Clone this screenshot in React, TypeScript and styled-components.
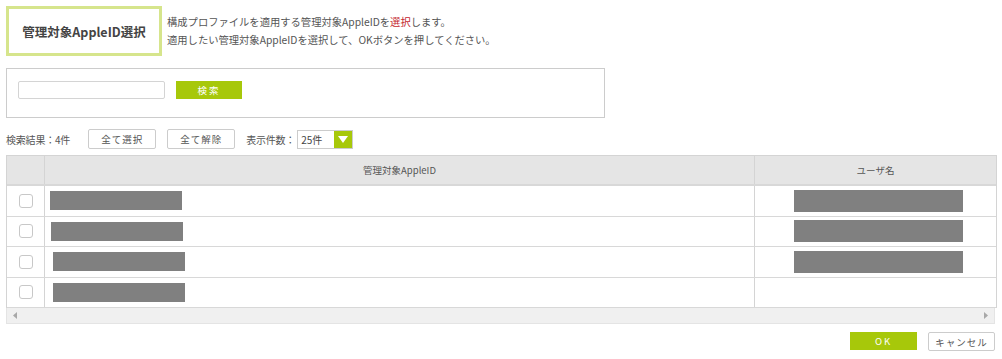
import React from "react";
import styled, { createGlobalStyle } from "styled-components";

const GlobalStyle = createGlobalStyle`
  body {
    margin: 0;
    background: #fff;
    font-family: "Noto Sans CJK JP", "Noto Sans", sans-serif;
    color: #555;
  }
`;

const Page = styled.div`
  width: 1002px;
  height: 359px;
  padding: 6px 7px 0 6px;
  box-sizing: border-box;
  overflow: hidden;
`;

const Header = styled.div`
  display: flex;
  align-items: flex-start;
  gap: 5px;
`;

const TitleBox = styled.div`
  width: 156px;
  height: 50px;
  box-sizing: border-box;
  border: 3px solid #d6e58c;
  display: flex;
  align-items: center;
  justify-content: center;
  font-size: 12.5px;
  font-weight: bold;
  color: #444;
`;

const Description = styled.div`
  padding-top: 7px;
  font-size: 10.3px;
  line-height: 18px;
  color: #555;
`;

const Red = styled.span`
  color: #c4262e;
`;

const SearchPanel = styled.div`
  margin-top: 12px;
  width: 599px;
  height: 50px;
  box-sizing: border-box;
  border: 1px solid #ccc;
  padding: 12px 11px;
  display: flex;
  align-items: flex-start;
  gap: 11px;
`;

const SearchInput = styled.input`
  width: 147px;
  height: 18px;
  box-sizing: border-box;
  border: 1px solid #d4d4d4;
  border-radius: 2px;
  margin: 0;
  padding: 0 4px;
`;

const GreenButton = styled.button<{ w: number }>`
  width: ${(p) => p.w}px;
  height: 18px;
  border: none;
  background: #a7c80a;
  color: #fff;
  font-family: inherit;
  font-size: 9.5px;
  letter-spacing: 2px;
  padding: 0;
  cursor: pointer;
`;

const Toolbar = styled.div`
  margin-top: 11px;
  height: 20px;
  display: flex;
  align-items: center;
  font-size: 10px;
  color: #555;
`;

const Label = styled.span<{ gap?: number }>`
  margin-right: ${(p) => p.gap ?? 0}px;
  letter-spacing: -0.2px;
`;

const WhiteButton = styled.button`
  width: 68px;
  height: 20px;
  box-sizing: border-box;
  border: 1px solid #ccc;
  border-radius: 2px;
  background: #fff;
  color: #555;
  font-family: inherit;
  font-size: 9.5px;
  letter-spacing: 1px;
  padding: 0;
  margin-right: 11px;
`;

const Select = styled.div`
  width: 56px;
  height: 19px;
  box-sizing: border-box;
  border: 1px solid #ccc;
  display: flex;
  align-items: stretch;
`;

const SelectValue = styled.span`
  flex: 1;
  padding-left: 3px;
  font-size: 10px;
  line-height: 17px;
  color: #444;
`;

const SelectArrow = styled.span`
  width: 18px;
  background: #a7c80a;
  display: flex;
  align-items: center;
  justify-content: center;
`;

const Table = styled.div`
  margin-top: 6px;
  width: 989px;
  border: 1px solid #d4d4d4;
  border-bottom: none;
`;

const Row = styled.div<{ head?: boolean }>`
  display: grid;
  grid-template-columns: 38px 710px 1fr;
  height: ${(p) => (p.head ? 30 : 30.5)}px;
  box-sizing: border-box;
  border-bottom: ${(p) => (p.head ? 2 : 1)}px solid #d8d8d8;
  background: ${(p) => (p.head ? "#e5e5e5" : "#fff")};
`;

const Cell = styled.div<{ center?: boolean; last?: boolean }>`
  display: flex;
  align-items: center;
  justify-content: ${(p) => (p.center ? "center" : "flex-start")};
  border-right: ${(p) => (p.last ? "none" : "1px solid #d4d4d4")};
  font-size: 9.5px;
  color: #555;
`;

const Checkbox = styled.span`
  width: 14px;
  height: 14px;
  box-sizing: border-box;
  border: 1px solid #c8c8c8;
  border-radius: 3px;
  background: #fff;
  margin-left: 1px;
`;

const Masked = styled.span<{ w: number; h: number; offset: number }>`
  display: block;
  width: ${(p) => p.w}px;
  height: ${(p) => p.h}px;
  margin-left: ${(p) => p.offset}px;
  background: #808080;
`;

const ScrollBar = styled.div`
  width: 989px;
  height: 16px;
  box-sizing: border-box;
  border: 1px solid #e4e4e4;
  border-top: none;
  background: #f0f0f0;
  display: flex;
  align-items: center;
  justify-content: space-between;
  padding: 0 6px;
`;

const Footer = styled.div`
  margin-top: 8px;
  width: 989px;
  display: flex;
  justify-content: flex-end;
  gap: 11px;
`;

const CancelButton = styled(WhiteButton)`
  width: 67px;
  height: 19px;
  margin-right: 0;
  font-size: 9.5px;
`;

const rows = [
  { id: { w: 132, off: 5 }, user: true },
  { id: { w: 132, off: 6 }, user: true },
  { id: { w: 132, off: 8 }, user: true },
  { id: { w: 132, off: 8 }, user: false },
];

const Arrow = ({ dir }: { dir: "left" | "right" }) => (
  <svg width="4" height="7" viewBox="0 0 4 7">
    <path d={dir === "left" ? "M4 0 L0 3.5 L4 7 Z" : "M0 0 L4 3.5 L0 7 Z"} fill="#a8a8a8" />
  </svg>
);

export default function App() {
  return (
    <Page>
      <GlobalStyle />
      <Header>
        <TitleBox>管理対象AppleID選択</TitleBox>
        <Description>
          構成プロファイルを適用する管理対象AppleIDを<Red>選択</Red>します。
          <br />
          適用したい管理対象AppleIDを選択して、OKボタンを押してください。
        </Description>
      </Header>

      <SearchPanel>
        <SearchInput />
        <GreenButton w={66}>検索</GreenButton>
      </SearchPanel>

      <Toolbar>
        <Label gap={18}>検索結果：4件</Label>
        <WhiteButton>全て選択</WhiteButton>
        <WhiteButton>全て解除</WhiteButton>
        <Label gap={2}>表示件数：</Label>
        <Select>
          <SelectValue>25件</SelectValue>
          <SelectArrow>
            <svg width="10" height="7" viewBox="0 0 10 7">
              <path d="M0 0 H10 L5 7 Z" fill="#fff" />
            </svg>
          </SelectArrow>
        </Select>
      </Toolbar>

      <Table>
        <Row head>
          <Cell />
          <Cell center>管理対象AppleID</Cell>
          <Cell center last>ユーザ名</Cell>
        </Row>
        {rows.map((r, i) => (
          <Row key={i}>
            <Cell center>
              <Checkbox />
            </Cell>
            <Cell>
              <Masked w={r.id.w} h={19} offset={r.id.off} />
            </Cell>
            <Cell last>
              {r.user && <Masked w={169} h={22} offset={39} />}
            </Cell>
          </Row>
        ))}
      </Table>
      <ScrollBar>
        <Arrow dir="left" />
        <Arrow dir="right" />
      </ScrollBar>

      <Footer>
        <GreenButton w={67}>OK</GreenButton>
        <CancelButton>キャンセル</CancelButton>
      </Footer>
    </Page>
  );
}
